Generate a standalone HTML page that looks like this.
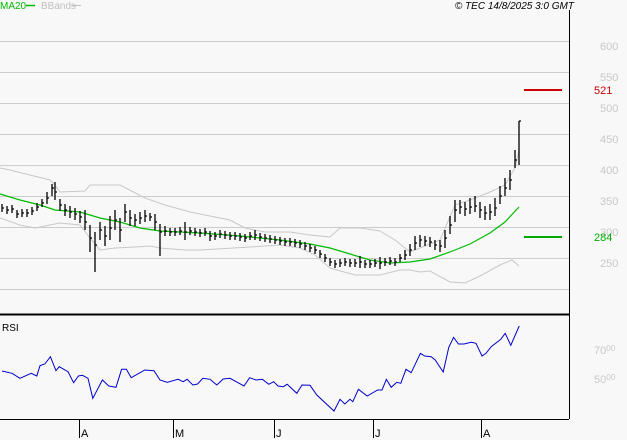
<!DOCTYPE html><html><head><style>
body{margin:0;background:#f8f8f8;width:627px;height:440px;overflow:hidden;font-family:"Liberation Sans",sans-serif}
</style></head><body>
<svg width="627" height="440" xmlns="http://www.w3.org/2000/svg" style="position:absolute;left:0;top:0">
<rect width="627" height="440" fill="#f8f8f8"/>
<g stroke="#cccccc" stroke-width="1">
<line x1="0" y1="41.5" x2="569" y2="41.5"/><line x1="0" y1="72.5" x2="569" y2="72.5"/><line x1="0" y1="103.5" x2="569" y2="103.5"/><line x1="0" y1="134.5" x2="569" y2="134.5"/><line x1="0" y1="165.5" x2="569" y2="165.5"/><line x1="0" y1="196.5" x2="569" y2="196.5"/><line x1="0" y1="227.5" x2="569" y2="227.5"/><line x1="0" y1="258.5" x2="569" y2="258.5"/><line x1="0" y1="289.5" x2="569" y2="289.5"/>
</g>
<line x1="569.5" y1="10" x2="569.5" y2="419" stroke="#000"/>
<line x1="0" y1="314.5" x2="569" y2="314.5" stroke="#000" stroke-width="2"/>
<line x1="0" y1="419.5" x2="569" y2="419.5" stroke="#000"/>
<g stroke="#000"><line x1="79.5" y1="419" x2="79.5" y2="438"/><line x1="173.5" y1="419" x2="173.5" y2="438"/><line x1="274.5" y1="419" x2="274.5" y2="438"/><line x1="373.5" y1="419" x2="373.5" y2="438"/><line x1="481.5" y1="419" x2="481.5" y2="438"/></g>
<g font-size="11" fill="#000"><text x="81" y="437">A</text><text x="175" y="437">M</text><text x="276" y="437">J</text><text x="375" y="437">J</text><text x="483" y="437">A</text></g>
<g font-size="11" fill="#c8c8c8"><text x="600" y="50">600</text><text x="600" y="81">550</text><text x="600" y="112">500</text><text x="600" y="143">450</text><text x="600" y="174">400</text><text x="600" y="205">350</text><text x="600" y="236">300</text><text x="600" y="267">250</text>
<text x="594" y="354">70<tspan font-size="8" dy="-3">00</tspan></text><text x="594" y="383">50<tspan font-size="8" dy="-3">00</tspan></text></g>
<line x1="524" y1="90" x2="562" y2="90" stroke="#cc0000" stroke-width="2"/>
<text x="594" y="94" font-size="11" fill="#cc0000">521</text>
<line x1="524" y1="237" x2="562" y2="237" stroke="#00aa00" stroke-width="2"/>
<text x="594" y="241" font-size="11" fill="#00aa00">284</text>
<text x="0" y="9" font-size="10" fill="#00bb00">MA20</text><line x1="26" y1="5.5" x2="35" y2="5.5" stroke="#00bb00" stroke-width="1.5"/>
<text x="41" y="9" font-size="10" fill="#c0c0c0">BBands</text><line x1="71" y1="5.5" x2="81" y2="5.5" stroke="#c0c0c0"/>
<text x="574" y="9" font-size="10" font-style="italic" fill="#000" text-anchor="end">© TEC 14/8/2025 3:0 GMT</text>
<text x="2" y="331" font-size="10" fill="#000">RSI</text>
<polyline fill="none" stroke="#c8c8c8" points="0,168 10,170 30,175 50,180 55,185 60,192 85,191 90,185 120,185 145,198 165,205 190,212 230,220 245,228 265,232 290,232 310,235 330,237 340,228 360,228 380,231 395,240 410,252 440,240 455,205 470,200 490,192 505,185 515,168 519,150"/>
<polyline fill="none" stroke="#c8c8c8" points="0,218 20,225 35,228 50,225 60,223 80,225 90,238 100,250 115,248 135,247 150,246 160,248 185,250 200,250 250,247 280,245 300,248 315,255 330,268 355,275 380,275 400,270 410,270 420,272 430,271 450,282 465,283 480,276 500,265 512,260 519,266"/>
<polyline fill="none" stroke="#00bb00" stroke-width="1.2" points="0,194 20,200 40,205 55,210 80,212 100,218 120,222 140,228 160,231 200,233 240,236 280,240 310,244 330,248 350,254 370,260 390,263 410,262 430,259 450,252 470,244 490,233 505,222 519,207"/>
<path fill="none" stroke="#000" stroke-width="1.3" d="M2 204V212M2 208h2M7 206V214M7 210h2M12 205V213M12 209h2M17 210V218M17 214h2M22 209V217M22 213h2M27 209V217M27 213h2M32 207V215M32 211h2M37 203V211M37 207h2M42 199V207M42 203h2M47 192V204M47 198h2M52 184V196M52 188h2M55 182V200M55 192h2M60 199V211M60 205h2M65 204V216M65 210h2M70 206V218M70 212h2M75 208V220M75 214h2M80 211V223M80 217h2M85 210V230M85 222h2M90 225V252M90 238h2M95 232V272M95 245h2M100 222V240M100 230h2M105 226V246M105 236h2M110 216V240M110 228h2M115 210V230M115 220h2M120 218V242M120 230h2M125 204V222M125 212h2M130 210V226M130 218h2M135 214V226M135 220h2M140 212V224M140 218h2M145 210V222M145 216h2M150 213V221M150 217h2M155 214V230M155 222h2M160 224V256M160 232h2M165 226V236M165 231h2M170 228V236M170 232h2M175 228V236M175 232h2M180 227V235M180 231h2M185 222V240M185 232h2M190 227V235M190 231h2M195 228V236M195 232h2M200 229V237M200 233h2M205 228V236M205 232h2M210 231V241M210 236h2M215 232V240M215 236h2M220 230V238M220 234h2M225 231V239M225 235h2M230 232V240M230 236h2M235 232V240M235 236h2M240 233V241M240 237h2M245 234V242M245 238h2M250 232V240M250 236h2M255 230V240M255 235h2M260 233V241M260 237h2M265 234V242M265 238h2M270 235V243M270 239h2M275 236V244M275 240h2M280 237V245M280 241h2M285 238V246M285 242h2M290 238V246M290 242h2M295 239V247M295 243h2M300 240V248M300 244h2M305 242V250M305 246h2M310 244V252M310 248h2M315 246V254M315 250h2M320 250V258M320 254h2M325 254V262M325 258h2M330 258V266M330 262h2M335 260V268M335 264h2M340 259V267M340 263h2M345 258V266M345 262h2M350 259V267M350 263h2M355 259V267M355 263h2M360 256V268M360 262h2M365 260V268M365 264h2M370 260V268M370 264h2M375 259V267M375 263h2M380 257V269M380 263h2M385 258V266M385 262h2M390 257V265M390 261h2M395 258V266M395 262h2M400 254V262M400 258h2M405 250V260M405 255h2M410 244V256M410 250h2M415 236V250M415 243h2M420 235V247M420 240h2M425 236V246M425 241h2M430 237V247M430 242h2M435 240V250M435 245h2M440 240V252M440 246h2M445 230V248M445 238h2M450 216V234M450 225h2M455 200V222M455 210h2M460 200V214M460 207h2M465 202V216M465 209h2M470 198V214M470 207h2M475 196V212M475 206h2M480 202V218M480 210h2M485 206V220M485 213h2M490 204V220M490 212h2M495 198V216M495 208h2M500 186V204M500 196h2M505 178V196M505 188h2M510 170V190M510 180h2M515 150V168M515 160h2M519 121V165M519 121h2"/>
<polyline fill="none" stroke="#0000cc" stroke-width="1" points="2,371 12,373.3 20,378.3 31.2,373.3 36.8,376 40,365.7 44.8,364 50.4,356.7 56,370.7 59.2,366.7 68,371.7 73.6,382.7 78.4,376 82.4,375.3 88,378.3 92.8,398.3 102.4,380 108.8,386 116,387.3 121.6,369.3 126.4,369.3 131.2,377.7 144.8,370 154,370.7 160,380 167.2,382.3 178,379.3 183.2,381.7 187.2,379.3 192.8,385 197.6,384 202.8,378.3 210,379.3 216.8,385 223.2,379 230,378.3 244,386 249.6,377.7 256,380 262.4,379.3 268.8,384.3 273.6,381.7 278,386 283.2,386.7 287.2,384.3 296.8,393.3 302,385 310,385.3 316.8,395 334,411 340,399.3 344.8,404 350,399.3 352.8,401.7 358.4,389.3 367.2,396 377.6,390 382,390 386.4,379.3 391.2,387.3 396.8,382.3 400.8,383.3 406,369.3 411.2,372.7 420.4,353.3 424.8,356 431.2,356.7 435.2,360 443.2,372 448.8,347.3 453.6,337.3 458.4,344 464,344 471.2,342.3 476,343.3 482,356 486,353.3 491.2,346.7 500.8,339.3 505.2,333.3 510.8,345.3 519.2,326"/>
</svg>
</body></html>
